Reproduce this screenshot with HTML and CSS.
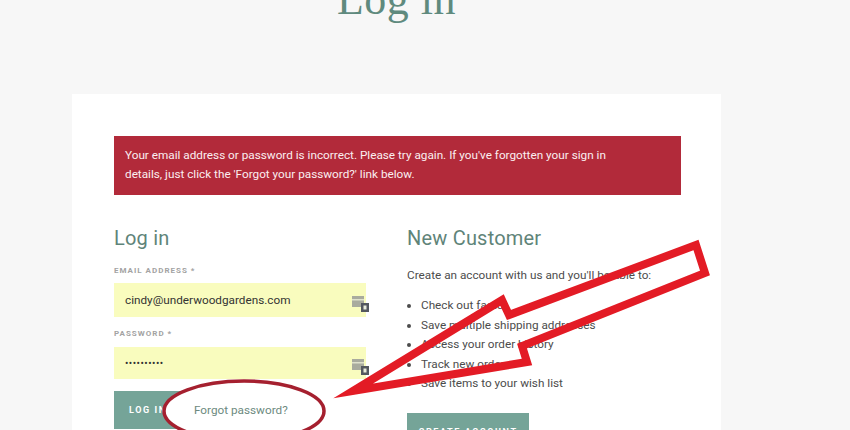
FILE: index.html
```html
<!DOCTYPE html>
<html lang="en">
<head>
<meta charset="utf-8">
<title>Log in</title>
<link rel="stylesheet" href="styles.css">
</head>
<body>
<div class="page">
  <h1 class="title">Log in</h1>
  <main class="card">
    <div class="alert">Your email address or password is incorrect. Please try again. If you've forgotten your sign in details, just click the 'Forgot your password?' link below.</div>
    <div class="columns">
      <section>
        <h2 class="heading">Log in</h2>
        <label class="label">EMAIL ADDRESS *</label>
        <div class="input">
          <span class="value">cindy@underwoodgardens.com</span>
          <svg class="key" viewBox="0 0 18 18"><rect x="0" y="1" width="12" height="11" fill="#a9ab9e"/><rect x="0" y="4" width="12" height="1.5" fill="#dfe1cc"/><rect x="9" y="8" width="8" height="9" fill="#54585f"/><rect x="11.5" y="10.5" width="3" height="4" fill="#e8ebdc"/></svg>
        </div>
        <label class="label label-second">PASSWORD *</label>
        <div class="input input-short">
          <span class="value dots">••••••••••</span>
          <svg class="key" viewBox="0 0 18 18"><rect x="0" y="1" width="12" height="11" fill="#a9ab9e"/><rect x="0" y="4" width="12" height="1.5" fill="#dfe1cc"/><rect x="9" y="8" width="8" height="9" fill="#54585f"/><rect x="11.5" y="10.5" width="3" height="4" fill="#e8ebdc"/></svg>
        </div>
        <div class="actions">
          <button class="button">LOG IN</button>
          <a class="forgot">Forgot password?</a>
        </div>
      </section>
      <section>
        <h2 class="heading">New Customer</h2>
        <p class="intro">Create an account with us and you'll be able to:</p>
        <ul class="list">
          <li>Check out faster</li>
          <li>Save multiple shipping addresses</li>
          <li>Access your order history</li>
          <li>Track new orders</li>
          <li>Save items to your wish list</li>
        </ul>
        <button class="button button-wide">CREATE ACCOUNT</button>
      </section>
    </div>
  </main>
  <svg class="ellipse" viewBox="0 0 850 430"><ellipse cx="244" cy="411" rx="80" ry="30" fill="#fff" stroke="#a5202f" stroke-width="3.5"/></svg>
  <svg class="arrow" viewBox="0 0 850 430"><polygon points="353,391 502,300 509,315 696,245 705,273 522,346 527,362" fill="none" stroke="#e31b25" stroke-width="8" stroke-miterlimit="30"/></svg>
</div>
</body>
</html>
```
FILE: styles.css
```css
html, body { margin: 0; padding: 0; height: 430px; overflow: hidden; }
body { background: #f7f7f7; font-family: Roboto, "Liberation Sans", sans-serif; color: #4c4c4c; }
.page { position: relative; width: 850px; height: 430px; overflow: hidden; padding-left: 72px; box-sizing: border-box; }
.title { margin: -30px 0 0 0; width: 649px; height: 124px; font: 400 44px/60px "Liberation Serif", serif; color: #5f8a7e; text-align: center; letter-spacing: .5px; }
.card { width: 649px; background: #fff; padding: 42px 40px 0 42px; box-sizing: border-box; height: 336px; }
.alert { background: #b22a3a; color: #fbeef0; font-size: 11.75px; line-height: 19px; padding: 10px 70px 10px 11px; height: 59px; box-sizing: border-box; }
.columns { display: grid; grid-template-columns: 252px 1fr; column-gap: 41px; margin-top: 30px; }
.heading { margin: 0; font-size: 20px; font-weight: 400; line-height: 26px; color: #5f8479; letter-spacing: .2px; }
.label { display: block; margin-top: 14px; font-size: 8px; line-height: 12px; font-weight: 700; letter-spacing: 1px; color: #a3a3a3; }
.label-second { margin-top: 11px; }
.input { margin-top: 6px; height: 34px; background: #f9fcbe; display: flex; align-items: center; justify-content: space-between; padding-left: 11px; }
.input-short { height: 32px; margin-top: 7px; }
.value { font-size: 11.75px; color: #333; }
.dots { font-size: 10px; letter-spacing: .5px; }
.key { width: 18px; height: 18px; margin-right: -4px; margin-top: 7px; }
.actions { display: flex; align-items: center; margin-top: 12px; }
.button { border: 0; background: #75a498; color: #fff; font: 700 9px Roboto, sans-serif; letter-spacing: 1.6px; height: 38px; width: 67px; text-align: left; padding: 0 0 0 15px; }
.forgot { position: relative; z-index: 5; margin-left: 13px; font-size: 11.75px; color: #6d8a80; }
.intro { margin: 15px 0 0; font-size: 11.75px; line-height: 18px; color: #4c4c4c; }
.list { margin: 12px 0 0; padding: 0 0 0 14px; font-size: 11.75px; line-height: 19.5px; }
.button-wide { display: block; width: 122px; margin-top: 19px; text-align: center; padding: 0; }
.ellipse, .arrow { position: absolute; left: 0; top: 0; width: 850px; height: 430px; }
.ellipse { z-index: 1; }
.arrow { z-index: 3; }
```
